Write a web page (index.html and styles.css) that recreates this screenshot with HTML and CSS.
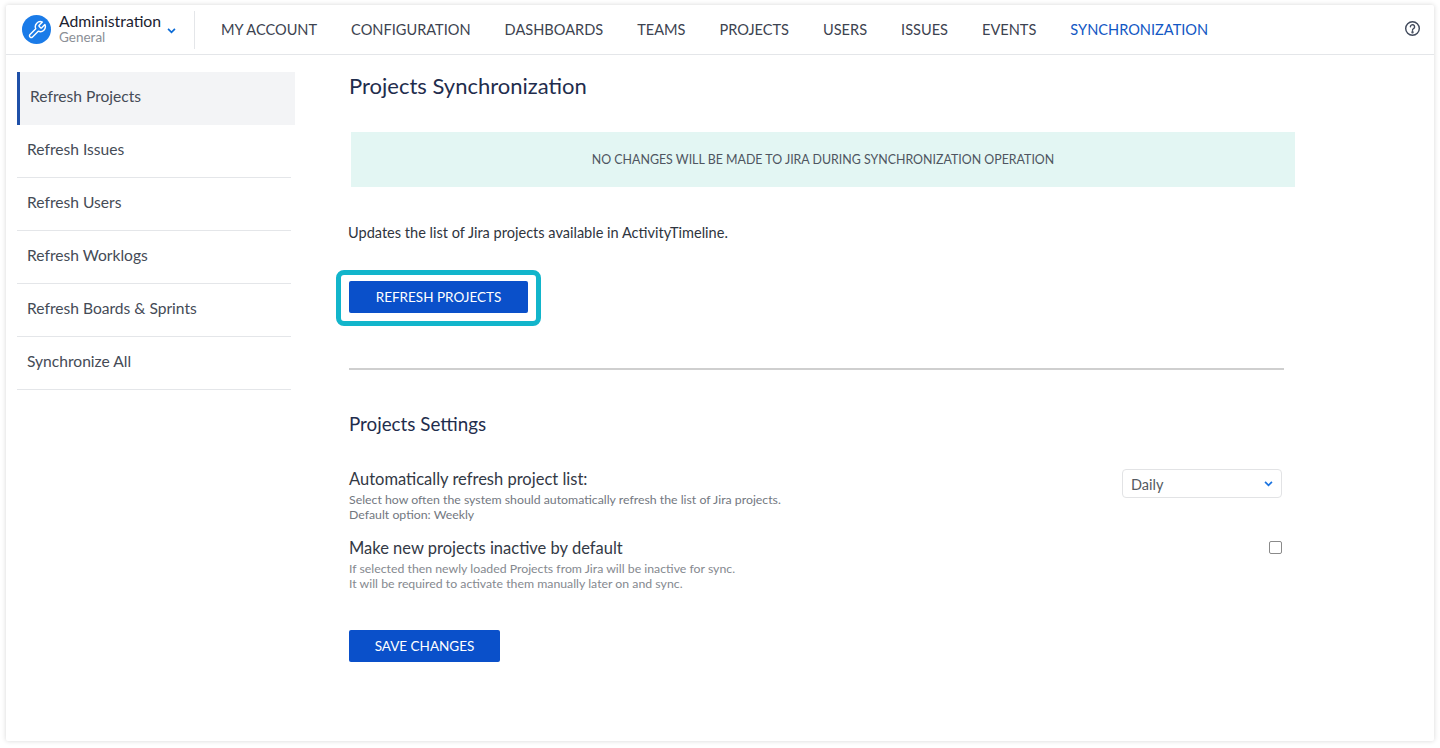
FILE: index.html
```html
<!DOCTYPE html>
<html lang="en">
<head>
    <meta charset="UTF-8">
    <meta name="viewport" content="width=device-width, initial-scale=1.0">
    <title>Projects Synchronization</title>
    <link rel="stylesheet" href="styles.css">
</head>
<body>
    <div class="window">
        <header class="topbar">
            <div class="brand">
                <span class="brand-icon">
                    <svg viewBox="0 0 24 24" width="20" height="20" fill="none" stroke="#fff" stroke-width="1.7" stroke-linejoin="round" stroke-linecap="round">
                        <path d="M14.7 6.3a1 1 0 0 0 0 1.4l1.6 1.6a1 1 0 0 0 1.4 0l3.77-3.77a6 6 0 0 1-7.94 7.94l-6.91 6.91a2.12 2.12 0 0 1-3-3l6.91-6.91a6 6 0 0 1 7.94-7.94l-3.76 3.76z"/>
                    </svg>
                </span>
                <div class="brand-text">
                    <div class="brand-title">Administration</div>
                    <div class="brand-sub">General</div>
                </div>
                <svg class="brand-caret" viewBox="0 0 10 7" width="9" height="6" fill="none" stroke="#0b6bd6" stroke-width="2"><path d="M1 1l4 4 4-4"/></svg>
            </div>
            <nav class="nav">
                <a>MY ACCOUNT</a>
                <a>CONFIGURATION</a>
                <a>DASHBOARDS</a>
                <a>TEAMS</a>
                <a>PROJECTS</a>
                <a>USERS</a>
                <a>ISSUES</a>
                <a>EVENTS</a>
                <a class="active">SYNCHRONIZATION</a>
            </nav>
            <svg class="help" viewBox="0 0 18 18" width="17" height="17" fill="none" stroke="#414a5c" stroke-width="1.5">
                <circle cx="9" cy="9" r="7.2"/>
                <path d="M6.8 7.2a2.2 2.2 0 1 1 3.4 1.8c-.8.5-1.2.9-1.2 1.8" stroke-linecap="round"/>
                <circle cx="9" cy="13" r=".5" fill="#414a5c"/>
            </svg>
        </header>

        <div class="layout">
            <aside class="sidebar">
                <a class="side-item selected">Refresh Projects</a>
                <a class="side-item">Refresh Issues</a>
                <a class="side-item">Refresh Users</a>
                <a class="side-item">Refresh Worklogs</a>
                <a class="side-item">Refresh Boards &amp; Sprints</a>
                <a class="side-item">Synchronize All</a>
            </aside>

            <main class="content">
                <h1>Projects Synchronization</h1>
                <div class="notice">NO CHANGES WILL BE MADE TO JIRA DURING SYNCHRONIZATION OPERATION</div>
                <p class="intro">Updates the list of Jira projects available in ActivityTimeline.</p>
                <div class="highlight">
                    <button class="btn btn-wide">REFRESH PROJECTS</button>
                </div>
                <hr class="divider">
                <h2>Projects Settings</h2>

                <div class="setting">
                    <div>
                        <div class="setting-title">Automatically refresh project list:</div>
                        <div class="setting-desc">Select how often the system should automatically refresh the list of Jira projects.<br>Default option: Weekly</div>
                    </div>
                    <div class="select">
                        <span>Daily</span>
                        <svg viewBox="0 0 10 7" width="9" height="6" fill="none" stroke="#1a73e0" stroke-width="2"><path d="M1 1l4 4 4-4"/></svg>
                    </div>
                </div>

                <div class="setting setting-check">
                    <div>
                        <div class="setting-title">Make new projects inactive by default</div>
                        <div class="setting-desc muted">If selected then newly loaded Projects from Jira will be inactive for sync.<br>It will be required to activate them manually later on and sync.</div>
                    </div>
                    <span class="checkbox"></span>
                </div>

                <button class="btn btn-save">SAVE CHANGES</button>
            </main>
        </div>
    </div>
</body>
</html>
```

FILE: styles.css
```css
/* Reset */
html, body {
    margin: 0;
    padding: 0;
    height: 100%;
    background: #fff;
    overflow: hidden;
}

body {
    padding: 5px 6px 7px;
    box-sizing: border-box;
    font-family: Lato, "Open Sans", sans-serif;
    color: #3d4350;
}

/* Window */
.window {
    height: 100%;
    background: #fff;
    box-shadow: 0 0 5px rgba(0, 0, 0, 0.16);
    border-radius: 2px;
}

/* Top bar */
.topbar {
    display: flex;
    align-items: center;
    height: 49px;
    padding: 0 13px 0 16px;
    border-bottom: 1px solid #e4e6e9;
}

.brand {
    display: flex;
    align-items: center;
    height: 38px;
    width: 172px;
    margin-right: 26px;
    border-right: 1px solid #e4e6e9;
}

.brand-icon {
    display: flex;
    align-items: center;
    justify-content: center;
    width: 29px;
    height: 29px;
    border-radius: 50%;
    background: #1a7be8;
    margin-right: 8px;
}

.brand-text {
    line-height: 16px;
    margin-top: -2px;
}

.brand-title {
    font-size: 15.8px;
    color: #1b2230;
}

.brand-sub {
    font-size: 13.5px;
    color: #8b8f96;
}

.brand-caret {
    margin-left: 6px;
    margin-top: 2px;
}

.nav {
    display: flex;
    gap: 34px;
    flex: 1;
}

.nav a {
    font-size: 14.58px;
    color: #3d4350;
    white-space: nowrap;
}

.nav a.active {
    color: #1257c4;
}

.help {
    margin-top: -2px;
}

/* Layout */
.layout {
    display: flex;
    padding: 17px 0 0 11px;
}

.sidebar {
    width: 278px;
    flex-shrink: 0;
    margin-right: 54px;
}

.side-item {
    display: block;
    height: 53px;
    line-height: 48px;
    width: 274px;
    padding-left: 10px;
    box-sizing: border-box;
    font-size: 15.6px;
    color: #454b56;
    border-bottom: 1px solid #e4e6e9;
}

.side-item.selected {
    width: 278px;
    padding-left: 10px;
    background: #f3f4f6;
    border-bottom: 0;
    border-left: 3px solid #1f50a8;
}

/* Main content */
.content {
    width: 946px;
}

h1 {
    margin: 0 0 32px;
    font-size: 22px;
    font-weight: 400;
    line-height: 28px;
    color: #1f2d4d;
}

.notice {
    margin-left: 2px;
    height: 55px;
    line-height: 55px;
    text-align: center;
    background: #e3f6f3;
    font-size: 12.4px;
    color: #4e5560;
}

.intro {
    margin: 36px 0 0 -1px;
    font-size: 14.55px;
    line-height: 20px;
    color: #2f3540;
}

.highlight {
    display: inline-block;
    margin: 27px 0 0 -13px;
    padding: 6px 8px 8px;
    border: 5px solid #12b5cb;
    border-radius: 8px;
}

.btn {
    display: block;
    border: 0;
    border-radius: 2px;
    background: #0a50ca;
    color: #fff;
    font-family: inherit;
    font-size: 13.5px;
    height: 32px;
    padding: 0;
}

.btn-wide {
    width: 179px;
}

.btn-save {
    width: 151px;
    margin-top: 39px;
}

.divider {
    width: 935px;
    margin: 42px 0 0;
    border: 0;
    border-top: 2px solid #cfcfcf;
}

h2 {
    margin: 41px 0 0;
    font-size: 18.8px;
    font-weight: 400;
    line-height: 26px;
    color: #1f2d4d;
}

.setting {
    display: flex;
    justify-content: space-between;
    align-items: flex-start;
    width: 933px;
    margin-top: 32px;
}

.setting-check {
    margin-top: 16px;
}

.setting-title {
    font-size: 16.5px;
    line-height: 20px;
    color: #333945;
}

.setting-desc {
    margin-top: 3px;
    font-size: 12.3px;
    line-height: 15px;
    color: #73787f;
}

.setting-desc.muted {
    color: #85898f;
}

.select {
    display: flex;
    align-items: center;
    justify-content: space-between;
    width: 160px;
    height: 29px;
    padding: 1px 8px 0;
    box-sizing: border-box;
    border: 1px solid #e2e3e5;
    border-radius: 4px;
    font-size: 14.5px;
    color: #555a62;
}

.checkbox {
    width: 13px;
    height: 13px;
    box-sizing: border-box;
    margin-top: 3px;
    border: 1px solid #8a8a8a;
    border-radius: 2px;
}
```
